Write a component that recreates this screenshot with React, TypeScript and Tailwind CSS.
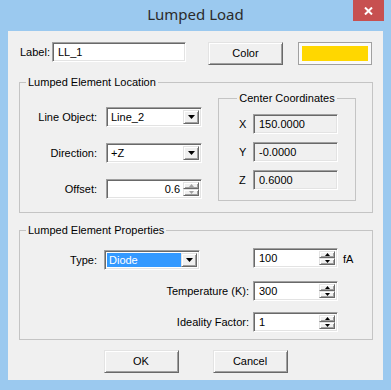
import React from 'react';

// classic win32 bevels
const sunken =
  'border border-t-[#a0a0a0] border-l-[#a0a0a0] border-r-white border-b-white shadow-[inset_1px_1px_0_#696969,inset_-1px_-1px_0_#e3e3e3]';
const raised =
  'border border-t-[#e3e3e3] border-l-[#e3e3e3] border-r-[#696969] border-b-[#696969] shadow-[inset_1px_1px_0_#ffffff,inset_-1px_-1px_0_#a0a0a0]';

const Arrow = ({ up = false, color = '#000' }: { up?: boolean; color?: string }) => (
  <svg width="7" height="4" viewBox="0 0 7 4">
    <path d={up ? 'M0 4h7L3.5 0z' : 'M0 0h7L3.5 4z'} fill={color} />
  </svg>
);

const SmallArrow = ({ up = false, color = '#000' }: { up?: boolean; color?: string }) => (
  <svg width="5" height="3" viewBox="0 0 5 3">
    <path d={up ? 'M0 3h5L2.5 0z' : 'M0 0h5L2.5 3z'} fill={color} />
  </svg>
);

const TextBox = ({ value, w, grey = false }: { value: string; w: string; grey?: boolean }) => (
  <div className={`${sunken} ${w} h-[20px] flex items-center pl-[5px] ${grey ? 'bg-[#f0f0f0]' : 'bg-white'}`}>
    {value}
  </div>
);

const Select = ({ value, highlight = false }: { value: string; highlight?: boolean }) => (
  <div className={`${sunken} w-[96px] h-[20px] bg-white flex p-[2px]`}>
    <div
      className={`flex-1 flex items-center pl-[2px] ${highlight ? 'bg-[#3399ff] text-white' : ''}`}
    >
      {value}
    </div>
    <div className={`${raised} w-[16px] bg-[#f0f0f0] flex items-center justify-center`}>
      <Arrow />
    </div>
  </div>
);

const SpinButtons = ({ dim = false }: { dim?: boolean }) => (
  <div className="w-[16px] flex flex-col">
    <div className={`${raised} flex-1 bg-[#f0f0f0] flex items-center justify-center`}>
      <SmallArrow up color={dim ? '#a0a0a0' : '#000'} />
    </div>
    <div className={`${raised} flex-1 bg-[#f0f0f0] flex items-center justify-center`}>
      <SmallArrow color={dim ? '#a0a0a0' : '#000'} />
    </div>
  </div>
);

const Spin = ({ value }: { value: string }) => (
  <div className={`${sunken} w-[85px] h-[20px] bg-white flex p-[2px]`}>
    <div className="flex-1 flex items-center pl-[3px]">{value}</div>
    <SpinButtons />
  </div>
);

const Button = ({ label }: { label: string }) => (
  <div className={`${raised} w-[75px] h-[23px] bg-[#f0f0f0] flex items-center justify-center`}>
    {label}
  </div>
);

const GroupBox = ({
  title,
  className,
  centered = false,
  children,
}: {
  title: string;
  className: string;
  centered?: boolean;
  children: React.ReactNode;
}) => (
  <div className={`relative border border-[#c4c4c4] ${className}`}>
    {centered ? (
      <div className="absolute -top-[8px] left-0 right-0 flex justify-center">
        <span className="px-[2px] bg-[#f0f0f0] leading-[14px]">{title}</span>
      </div>
    ) : (
      <span className="absolute -top-[8px] left-[6px] px-[2px] bg-[#f0f0f0] leading-[14px]">{title}</span>
    )}
    {children}
  </div>
);

export default function App() {
  return (
    <div className="w-[391px] h-[390px] bg-[#9bc9ef] font-['Liberation_Sans',Arial,sans-serif] text-[11px] text-black">
      {/* title bar */}
      <div className="relative h-[31px] flex items-center justify-center">
        <span className="font-['Noto_Sans',sans-serif] text-[15px] text-[#2b2b2b] -mt-[2px]">Lumped Load</span>
        <div className="absolute top-0 right-[7px] w-[31px] h-[21px] bg-[#c75050] flex items-center justify-center">
          <svg width="9" height="8" viewBox="0 0 9 8">
            <path d="M1 0.5L8 7.5M8 0.5L1 7.5" stroke="#fff" strokeWidth="2" />
          </svg>
        </div>
      </div>

      {/* client */}
      <div className="mx-[8px] h-[349px] bg-[#f0f0f0] px-[11px] pt-[11px]">
        <div className="flex items-start">
          <span className="w-[33px] pl-[1px] leading-[20px]">Label:</span>
          <TextBox value="LL_1" w="w-[134px]" />
          <div className="ml-[22px]">
            <Button label="Color" />
          </div>
          <div className="ml-[15px] w-[74px] h-[23px] border border-[#a0a0a0] bg-[#fafafa] p-[3px]">
            <div className="w-full h-full bg-[#ffd700]" />
          </div>
        </div>

        <GroupBox title="Lumped Element Location" className="mt-[17px] w-[354px] h-[131px] flex pt-[15px]">
          <div className="flex flex-col gap-[16px] pt-[9px]">
            <div className="flex items-center">
              <span className="w-[77px] text-right">Line Object:</span>
              <div className="ml-[9px]">
                <Select value="Line_2" />
              </div>
            </div>
            <div className="flex items-center">
              <span className="w-[77px] text-right">Direction:</span>
              <div className="ml-[9px]">
                <Select value="+Z" />
              </div>
            </div>
            <div className="flex items-center">
              <span className="w-[77px] text-right">Offset:</span>
              <div className="ml-[9px]">
                <div className={`${sunken} w-[96px] h-[20px] bg-white flex p-[2px]`}>
                  <div className="flex-1 flex items-center justify-end pr-[3px]">0.6</div>
                  <SpinButtons dim />
                </div>
              </div>
            </div>
          </div>

          <GroupBox
            title="Center Coordinates"
            centered
            className="ml-[16px] w-[138px] h-[103px] pt-[15px] pl-[20px]"
          >
            <div className="flex flex-col gap-[8px]">
              {[
                ['X', '150.0000'],
                ['Y', '-0.0000'],
                ['Z', '0.6000'],
              ].map(([k, v]) => (
                <div key={k} className="flex items-center">
                  <span className="w-[14px]">{k}</span>
                  <TextBox value={v} w="w-[85px]" grey />
                </div>
              ))}
            </div>
          </GroupBox>
        </GroupBox>

        <GroupBox title="Lumped Element Properties" className="mt-[17px] w-[354px] h-[110px] pt-[17px]">
          <div className="flex items-start">
            <span className="w-[77px] text-right mt-[4px]">Type:</span>
            <div className="ml-[7px] mt-[2px]">
              <Select value="Diode" highlight />
            </div>
            <div className="ml-[53px]">
              <Spin value="100" />
            </div>
            <span className="ml-[5px] mt-[3px]">fA</span>
          </div>
          <div className="flex items-center mt-[11px]">
            <span className="w-[229px] text-right">Temperature (K):</span>
            <div className="ml-[4px]">
              <Spin value="300" />
            </div>
          </div>
          <div className="flex items-center mt-[11px]">
            <span className="w-[229px] text-right">Ideality Factor:</span>
            <div className="ml-[4px]">
              <Spin value="1" />
            </div>
          </div>
        </GroupBox>

        <div className="flex justify-center gap-[34px] mt-[10px]">
          <Button label="OK" />
          <Button label="Cancel" />
        </div>
      </div>
    </div>
  );
}
